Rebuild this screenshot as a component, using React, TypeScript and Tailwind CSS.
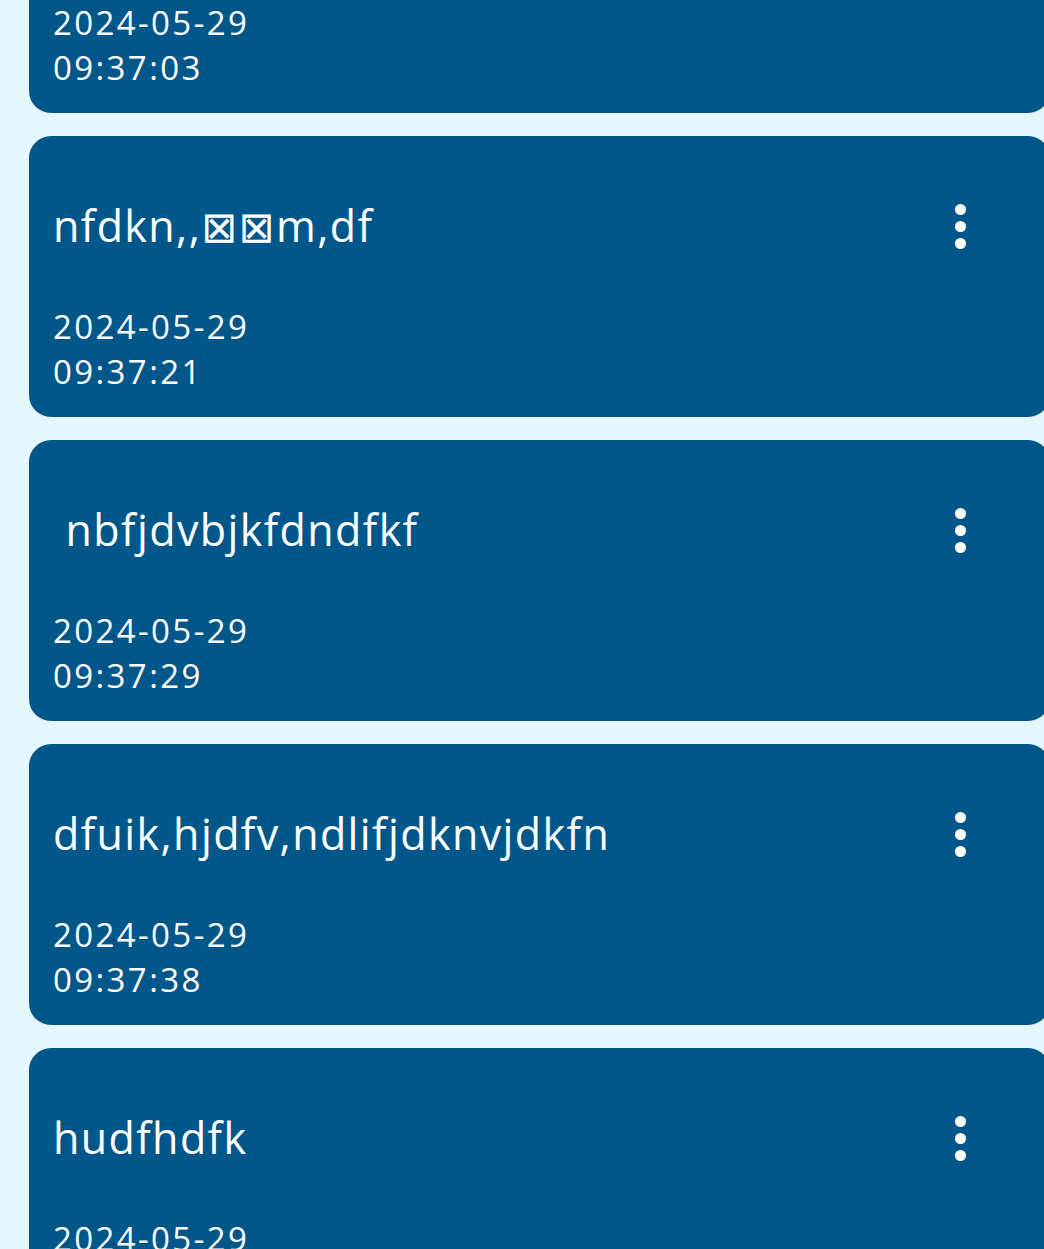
import React from "react";

type Note = { title: string; date: string; time: string };

const notes: Note[] = [
  { title: "jdfnkdjf", date: "2024-05-29", time: "09:37:03" },
  { title: "nfdkn,,⊠⊠m,df", date: "2024-05-29", time: "09:37:21" },
  { title: " nbfjdvbjkfdndfkf", date: "2024-05-29", time: "09:37:29" },
  { title: "dfuik,hjdfv,ndlifjdknvjdkfn", date: "2024-05-29", time: "09:37:38" },
  { title: "hudfhdfk", date: "2024-05-29", time: "09:37:46" },
];

function MoreIcon() {
  return (
    <div className="flex flex-col items-center gap-[6px]">
      <span className="block w-[11px] h-[11px] rounded-full bg-white" />
      <span className="block w-[11px] h-[11px] rounded-full bg-white" />
      <span className="block w-[11px] h-[11px] rounded-full bg-white" />
    </div>
  );
}

function NoteCard({ note }: { note: Note }) {
  return (
    <div className="ml-[29px] w-[1021px] shrink-0 rounded-[22px] bg-[#02578a] pl-[24px] pr-[84px] pt-[44px] pb-[23px] text-white">
      {/* title + menu */}
      <div className="flex items-center justify-between h-[92px]">
        <span className="whitespace-pre text-[43px] leading-[92px] tracking-[1.4px]">{note.title}</span>
        <MoreIcon />
      </div>

      {/* timestamp */}
      <div className="mt-[32px] text-[33px] leading-[45px] tracking-[2.4px]">
        <div>{note.date}</div>
        <div>{note.time}</div>
      </div>
    </div>
  );
}

export default function App() {
  return (
    <div
      className="w-[1044px] h-[1249px] overflow-hidden bg-[#e4f7fe]"
      style={{ fontFamily: '"Open Sans", "Noto Sans", "DejaVu Sans", sans-serif' }}
    >
      <div className="-mt-[168px] flex flex-col gap-[23px]">
        {notes.map((n) => (
          <NoteCard key={n.time} note={n} />
        ))}
      </div>
    </div>
  );
}
